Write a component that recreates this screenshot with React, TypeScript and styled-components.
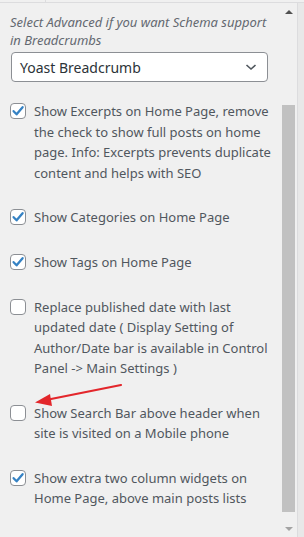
import React from "react";
import styled, { createGlobalStyle } from "styled-components";

const Global = createGlobalStyle`
  html, body { margin: 0; padding: 0; background: #f0f0f0; }
  body { font-family: "Noto Sans", "Open Sans", sans-serif; }
`;

const Page = styled.div`
  width: 304px;
  height: 537px;
  display: flex;
  flex-direction: column;
  background: #f0f0f0;
  overflow: hidden;
`;

const TopBar = styled.div`
  height: 2px;
  border-bottom: 1px solid #dcdcde;
  display: flex;
`;

const TopCell = styled.div`
  width: 45px;
  border-right: 1px solid #dcdcde;
`;

const Body = styled.div`
  flex: 1;
  display: flex;
  min-height: 0;
`;

const Main = styled.div`
  position: relative;
  width: 282px;
  padding: 10px 0 0 10px;
  box-sizing: border-box;
`;

const Description = styled.p`
  margin: 0;
  font-style: italic;
  font-size: 13px;
  line-height: 18px;
  color: #646970;
  white-space: nowrap;
`;

const SelectBox = styled.div`
  margin: 3px 0 0 1px;
  width: 257px;
  height: 30px;
  box-sizing: border-box;
  background: #fff;
  border: 1px solid #8c8f94;
  border-radius: 4px;
  display: flex;
  align-items: center;
  justify-content: space-between;
  padding: 0 10px 0 8px;
  font-size: 14px;
  color: #2c3338;
`;

const OptionList = styled.div`
  display: flex;
  flex-direction: column;
  gap: 24.2px;
  margin-top: 19px;
`;

const Row = styled.label`
  display: flex;
  align-items: flex-start;
  gap: 8px;
`;

const Box = styled.span<{ $checked: boolean }>`
  flex: none;
  width: 16px;
  height: 16px;
  margin-top: 2.25px;
  box-sizing: border-box;
  background: #fff;
  border: 1px solid #8c8f94;
  border-radius: 4px;
  display: flex;
  align-items: center;
  justify-content: center;
`;

const Label = styled.span`
  font-size: 13px;
  line-height: 20.5px;
  color: #50575e;
  white-space: nowrap;
`;

const Scrollbar = styled.div`
  width: 15px;
  display: flex;
  flex-direction: column;
  align-items: flex-start;
`;

const ArrowBtn = styled.div<{ $up?: boolean; $color: string }>`
  width: 13px;
  height: 17px;
  display: flex;
  align-items: center;
  justify-content: center;
  &::before {
    content: "";
    border-left: 4px solid transparent;
    border-right: 4px solid transparent;
    ${(p) =>
      p.$up
        ? `border-bottom: 4px solid ${p.$color};`
        : `border-top: 4px solid ${p.$color};`}
  }
`;

const Track = styled.div`
  flex: 1;
  width: 13px;
  padding: 85px 0 8px;
  box-sizing: border-box;
  display: flex;
`;

const Thumb = styled.div`
  flex: 1;
  background: #c1c1c1;
`;

const RightEdge = styled.div`
  width: 7px;
  background: #e8e8e8;
  border-left: 1px solid #dcdcde;
  box-sizing: border-box;
`;

const Annotation = styled.svg`
  position: absolute;
  left: 0;
  top: 0;
  pointer-events: none;
`;

const Check = () => (
  <svg width="14" height="14" viewBox="0 0 14 14">
    <path d="M2.6 7.2 L5.6 10.3 L11.6 3.2" fill="none" stroke="#3582c4" strokeWidth="2.3" strokeLinecap="round" strokeLinejoin="round" />
  </svg>
);

const Chevron = () => (
  <svg width="12" height="8" viewBox="0 0 12 8">
    <path d="M1.5 2 L6 6 L10.5 2" fill="none" stroke="#50575e" strokeWidth="1.6" />
  </svg>
);

const options: { checked: boolean; lines: string[] }[] = [
  {
    checked: true,
    lines: [
      "Show Excerpts on Home Page, remove",
      "the check to show full posts on home",
      "page. Info: Excerpts prevents duplicate",
      "content and helps with SEO",
    ],
  },
  { checked: true, lines: ["Show Categories on Home Page"] },
  { checked: true, lines: ["Show Tags on Home Page"] },
  {
    checked: false,
    lines: [
      "Replace published date with last",
      "updated date ( Display Setting of",
      "Author/Date bar is available in Control",
      "Panel -> Main Settings )",
    ],
  },
  {
    checked: false,
    lines: ["Show Search Bar above header when", "site is visited on a Mobile phone"],
  },
  {
    checked: true,
    lines: ["Show extra two column widgets on", "Home Page, above main posts lists"],
  },
];

export default function App() {
  return (
    <Page>
      <Global />
      <TopBar>
        <TopCell />
      </TopBar>
      <Body>
        <Main>
          <Description>
            Select Advanced if you want Schema support
            <br />
            in Breadcrumbs
          </Description>
          <SelectBox>
            <span>Yoast Breadcrumb</span>
            <Chevron />
          </SelectBox>
          <OptionList>
            {options.map((o, i) => (
              <Row key={i}>
                <Box $checked={o.checked}>{o.checked && <Check />}</Box>
                <Label>
                  {o.lines.map((l, j) => (
                    <React.Fragment key={j}>
                      {j > 0 && <br />}
                      {l}
                    </React.Fragment>
                  ))}
                </Label>
              </Row>
            ))}
          </OptionList>
          <Annotation width="282" height="534" viewBox="0 0 282 534">
            <line x1="121" y1="382" x2="46" y2="397" stroke="#e3262b" strokeWidth="2.2" strokeLinecap="round" />
            <polygon points="35,399.5 50,391 52,403" fill="#e3262b" />
          </Annotation>
        </Main>
        <Scrollbar>
          <ArrowBtn $up $color="#505050" />
          <Track>
            <Thumb />
          </Track>
          <ArrowBtn $color="#a3a3a3" />
        </Scrollbar>
        <RightEdge />
      </Body>
    </Page>
  );
}
